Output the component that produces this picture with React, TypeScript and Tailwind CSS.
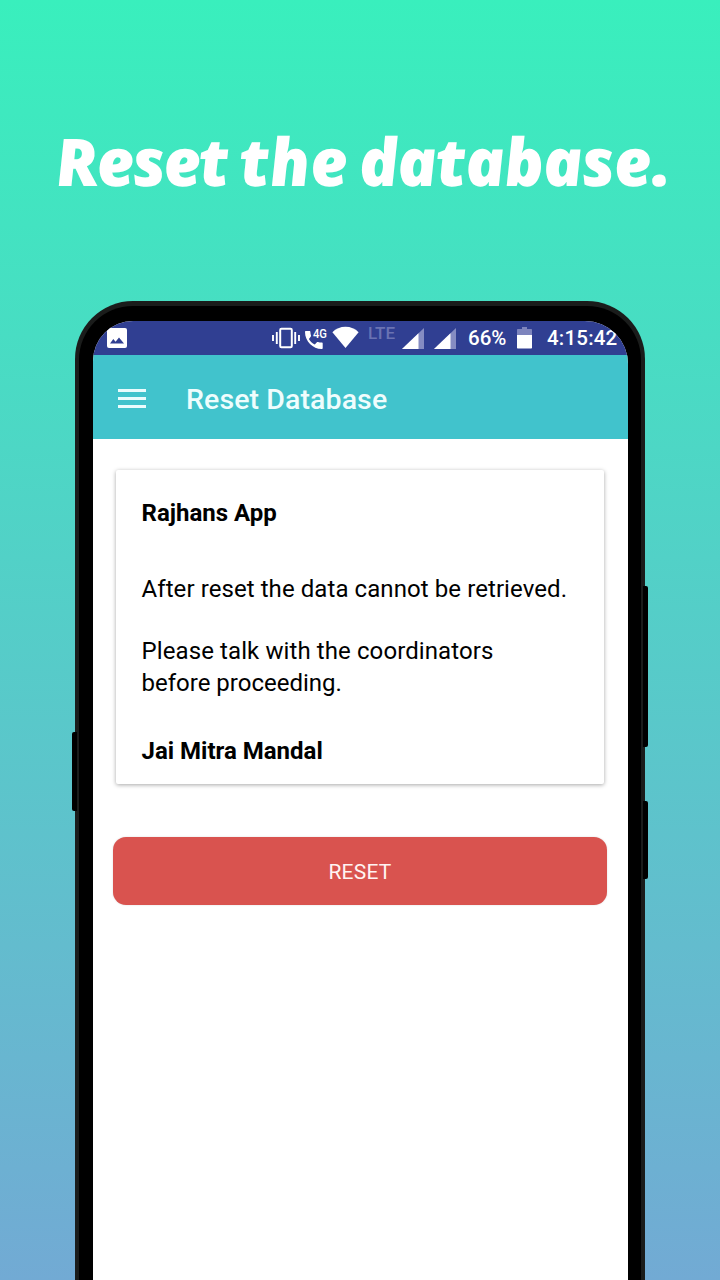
function PictureIcon() {
  return (
    <svg className="mt-[7px] ml-[14px] h-5 w-5 shrink-0" viewBox="0 0 20 20">
      <rect width="20" height="20" rx="2" fill="#fff" />
      <path d="M3 15.5 6.3 11l2.3 2.7L12 9.5l5 6z" fill="#303f92" />
    </svg>
  );
}

function VibrateIcon() {
  return (
    <svg className="mt-[6px] ml-[145px] h-[22px] w-[28px] shrink-0" viewBox="0 0 28 22" fill="none" stroke="#fff">
      <rect x="8.2" y="1.7" width="11.6" height="18.6" rx="1.2" strokeWidth="2" />
      <path d="M1 8v6M4.8 5v12M23.2 5v12M27 8v6" strokeWidth="1.9" />
    </svg>
  );
}

function CallIcon() {
  return (
    <svg className="mt-[4px] ml-[5px] h-[25px] w-[23px] shrink-0 overflow-visible" viewBox="0 0 23 25">
      <path
        d="M1 6h3.400c.6 0 1 .4 1 1 0 1.300.2 2.500.6 3.600.1.4 0 .8-.3 1.100L3.900 13.900c1.400 2.600 3.300 4.300 5.900 5.500l2.100-2.200c.3-.3.700-.4 1.100-.2 1.200.4 2.400.6 3.700.6.600 0 1 .4 1 1V23c0 .600-.4 1-1 1C7.900 24 0 16.400 0 7c0-.600.4-1 1-1z"
        fill="#fff"
      />
      <text x="8" y="12.500" fill="#fff" fontFamily="Roboto, sans-serif" fontSize="13" textLength="14" lengthAdjust="spacingAndGlyphs">
        4G
      </text>
    </svg>
  );
}

function WifiIcon() {
  return (
    <svg className="mt-[5px] ml-[4px] h-[22px] w-[27px] shrink-0" viewBox="0 0 27 22">
      <path d="M.4 6.200C3.800 2.600 8.400.7 13.500.7s9.700 1.900 13.100 5.500L13.500 22z" fill="#fff" />
    </svg>
  );
}

function SignalIcon({ className }: { className: string }) {
  return (
    <svg className={`mt-[7px] h-[21px] w-[22px] shrink-0 ${className}`} viewBox="0 0 22 21">
      <path d="M0 21 22 0v21z" fill="#858cc2" />
      <path d="M0 21 16.500 5.200V21z" fill="#fff" />
    </svg>
  );
}

function BatteryIcon() {
  return (
    <svg className="mt-[5px] ml-[10px] h-[23px] w-[15px] shrink-0" viewBox="0 0 15 23">
      <path d="M5 1h5v2h4c.6 0 1 .4 1 1v5H0V4c0-.600.4-1 1-1h4z" fill="#7d84bd" />
      <path d="M0 9h15v12.500c0 .600-.4 1-1 1H1c-.600 0-1-.4-1-1z" fill="#fff" />
    </svg>
  );
}

function StatusBar() {
  return (
    <div className="flex h-[34px] items-start bg-[#303f92] font-medium whitespace-nowrap text-white">
      <PictureIcon />
      <VibrateIcon />
      <CallIcon />
      <WifiIcon />
      <span className="mt-[2px] ml-[9px] w-[28px] text-[17px] leading-5 text-[#6a73b3]">LTE</span>
      <SignalIcon className="ml-[6px]" />
      <SignalIcon className="ml-[10px]" />
      <span className="mt-[5px] ml-[12px] w-[39px] text-[20.500px] leading-6">66%</span>
      <BatteryIcon />
      <span className="mt-[5px] ml-[15px] text-[20.500px] leading-6 tracking-[0.200px]">4:15:42</span>
    </div>
  );
}

function AppBar() {
  return (
    <header className="flex h-[84px] items-center bg-[#41c3cc] pb-px pl-[25px] text-white">
      <div className="mt-1 flex w-[28px] flex-col gap-[5px]">
        <span className="h-[3px] bg-[#eafcfd]" />
        <span className="h-[3px] bg-[#eafcfd]" />
        <span className="h-[3px] bg-[#eafcfd]" />
      </div>
      <h2 className="mt-[7px] ml-[40px] text-[28.500px] leading-9 font-medium tracking-[0.100px] whitespace-nowrap text-[#effdfd]">
        Reset Database
      </h2>
    </header>
  );
}

export default function App() {
  return (
    <main className="flex h-[1280px] w-[720px] flex-col overflow-hidden bg-linear-to-b/srgb from-[#39efbd] to-[#72aad4] font-['Roboto',sans-serif]">
      <h1 className="flex h-[301px] shrink-0 pt-[115px] pl-[60px] font-['Noto_Sans',sans-serif] text-[66px] leading-[90px] font-black whitespace-nowrap text-white italic">
        <span className="w-[184px] skew-x-6 tracking-[-2.200px]">Reset</span>
        <span className="w-[119px] skew-x-6 tracking-[-0.500px]">the</span>
        <span className="skew-x-6 tracking-[-1.200px]">database.</span>
      </h1>
      <div className="relative ml-[75px] h-[979px] w-[570px] shrink-0 rounded-t-[58px] bg-[#1a1c1b]">
        <span className="absolute top-[431px] -left-[3px] h-[79px] w-[5px] rounded-l-[2px] bg-black" />
        <span className="absolute top-[285px] -right-[3px] h-[161px] w-[5px] rounded-r-[2px] bg-black" />
        <span className="absolute top-[500px] -right-[3px] h-[78px] w-[5px] rounded-r-[2px] bg-black" />
        <div className="h-full px-[4px] pt-[5px]">
          <div className="h-full rounded-t-[54px] bg-black pt-[15px] pr-[13px] pl-[14px]">
            <div className="h-full overflow-hidden rounded-tl-[40px] rounded-tr-[43px] bg-white">
              <StatusBar />
              <AppBar />
              <section className="mt-[31px] ml-[23px] h-[314px] w-[488px] rounded-[2px] bg-white pt-[27px] pl-[25.500px] text-[24px] leading-8 whitespace-nowrap text-black shadow-[0_1px_4px_rgba(0,0,0,0.35)]">
                <p className="font-bold">Rajhans App</p>
                <p className="mt-11 tracking-[0.080px]">After reset the data cannot be retrieved.</p>
                <p className="mt-[31px] leading-[31.500px] tracking-[0.100px]">
                  Please talk with the coordinators
                  <br />
                  <span className="tracking-normal">before proceeding.</span>
                </p>
                <p className="mt-[36px] font-bold">Jai Mitra Mandal</p>
              </section>
              <button className="mt-[53px] ml-[20px] block h-[68px] w-[494px] rounded-[13px] bg-[#d9534f] pt-[3px] text-[21px] tracking-[0.200px] text-[#fff3f2] shadow-[0_0_2px_rgba(0,0,0,0.15)]">
                RESET
              </button>
            </div>
          </div>
        </div>
      </div>
    </main>
  );
}
